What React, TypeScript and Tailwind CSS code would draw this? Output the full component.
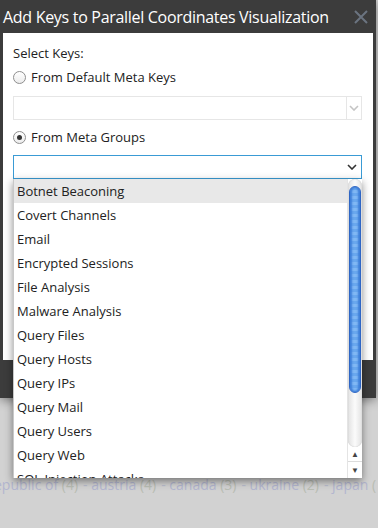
import React from "react";

const groups = [
  "Botnet Beaconing",
  "Covert Channels",
  "Email",
  "Encrypted Sessions",
  "File Analysis",
  "Malware Analysis",
  "Query Files",
  "Query Hosts",
  "Query IPs",
  "Query Mail",
  "Query Users",
  "Query Web",
  "SQL Injection Attacks",
];

const countries = [
  ["epublic of", "(4)"],
  ["austria", "(4)"],
  ["canada", "(3)"],
  ["ukraine", "(2)"],
  ["japan", "("],
];

const Chevron = ({ color }: { color: string }) => (
  <svg width="10" height="6" viewBox="0 0 10 6" fill="none">
    <path d="M1 1l4 4 4-4" stroke={color} strokeWidth="1.6" />
  </svg>
);

const Radio = ({ checked }: { checked?: boolean }) => (
  <span className="flex h-[13px] w-[13px] items-center justify-center rounded-full border border-[#8e8e8e] bg-gradient-to-b from-white to-[#ececec]">
    {checked && <span className="h-[5px] w-[5px] rounded-full bg-[#333]" />}
  </span>
);

const Scrollbar = () => (
  <div className="flex h-full w-[15px] flex-col border-l border-[#e4e4e4] bg-white">
    <div className="flex flex-1 flex-col rounded-full bg-gradient-to-r from-[#e2e2e2] via-[#fbfbfb] to-[#e2e2e2] px-[1px] pt-[7px] shadow-[inset_0_0_1px_#b0b0b0]">
      <div className="h-[207px] rounded-full border border-[#2f66c4] bg-[repeating-linear-gradient(180deg,#6aa8ee_0px,#6aa8ee_3px,#80b8f4_3px,#80b8f4_6px)] shadow-[inset_2px_0_2px_#3e7fd8,inset_-2px_0_2px_#3e7fd8]" />
    </div>
    <div className="flex h-[15px] items-center justify-center border-b border-[#dcdcdc] text-[8px] text-[#444]">
      ▲
    </div>
    <div className="flex h-[16px] items-center justify-center text-[8px] text-[#444]">
      ▼
    </div>
  </div>
);

export default function App() {
  return (
    <div
      className="relative h-[528px] w-[378px] overflow-hidden bg-[#d2d2d2]"
      style={{ fontFamily: '"Open Sans", "Liberation Sans", sans-serif' }}
    >
      <div className="-ml-[6px] whitespace-nowrap pt-[475px] text-[14px] leading-[20px]">
        {countries.map(([name, count], i) => (
          <span key={i} className="mr-[5px]">
            {i > 0 && <span className="text-[#b9bccc]">- </span>}
            <span className="text-[#b3b6cf]">{name} </span>
            <span className="text-[#b9bdb3]">{count}</span>
          </span>
        ))}
      </div>

      <div className="absolute left-0 top-0 flex h-[398px] w-[376px] flex-col bg-[#3c3c3c] shadow-[0_2px_10px_rgba(0,0,0,0.45)]">
        <div className="flex h-[33px] items-center justify-between pl-[3px] pr-[8px]">
          <span className="whitespace-nowrap text-[16px] tracking-[-0.3px] text-white">
            Add Keys to Parallel Coordinates Visualization
          </span>
          <svg width="14" height="14" viewBox="0 0 14 14">
            <path d="M1 1l12 12M13 1L1 13" stroke="#6b7480" strokeWidth="2" />
          </svg>
        </div>

        <div className="mx-[3px] flex h-[327px] flex-col bg-white px-[10px] pt-[10px] text-[13px] text-[#222]">
          <div className="leading-[20px]">Select Keys:</div>
          <label className="mt-[4px] flex items-center gap-[5px] leading-[20px]">
            <Radio />
            <span>From Default Meta Keys</span>
          </label>
          <div className="mt-[9px] flex h-[24px] w-[349px] justify-end border border-[#e6e6e6]">
            <div className="flex w-[15px] items-center justify-center border-l border-[#e6e6e6]">
              <Chevron color="#c4c4c4" />
            </div>
          </div>
          <label className="mt-[7px] flex items-center gap-[5px] leading-[20px]">
            <Radio checked />
            <span>From Meta Groups</span>
          </label>

          <div className="relative mt-[8px] w-[349px]">
            <div className="flex h-[24px] items-center justify-end border border-[#3a9bd5] pr-[4px]">
              <Chevron color="#333" />
            </div>
            <div className="absolute left-0 top-[24px] z-10 flex h-[299px] w-[349px] overflow-hidden border-l border-[#c8c8c8] bg-white shadow-[0_3px_8px_rgba(0,0,0,0.45)]">
              <div className="flex-1">
                {groups.map((g, i) => (
                  <div
                    key={g}
                    className={`h-[24px] pl-[3px] leading-[24px] ${i === 0 ? "bg-[#e8e8e8]" : ""}`}
                  >
                    {g}
                  </div>
                ))}
              </div>
              <Scrollbar />
            </div>
          </div>
        </div>
      </div>
    </div>
  );
}
